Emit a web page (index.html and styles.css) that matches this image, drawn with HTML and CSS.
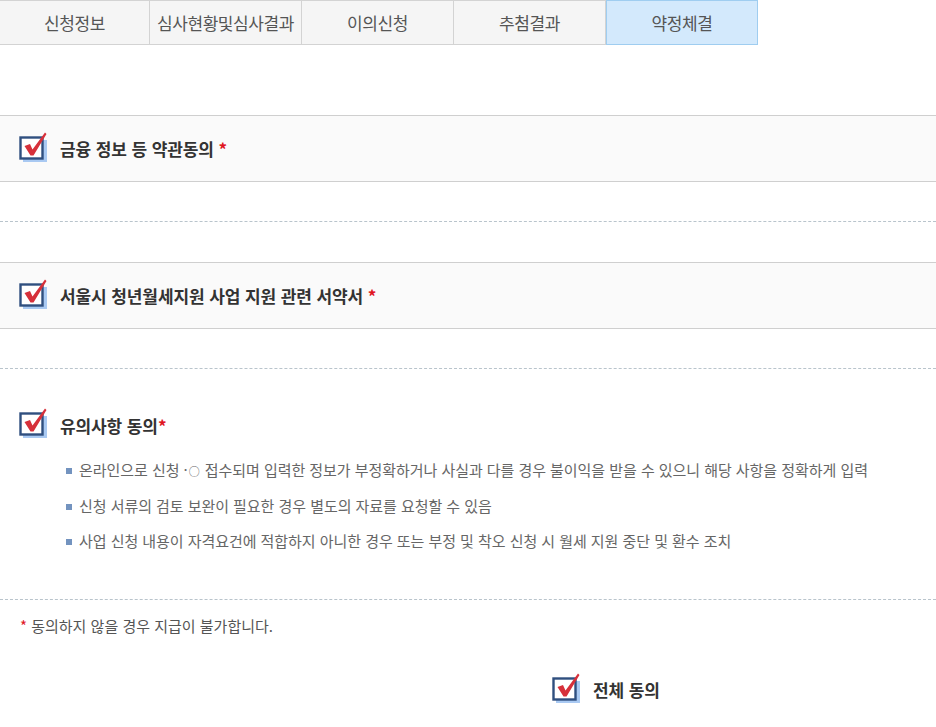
FILE: index.html
```html
<!DOCTYPE html>
<html lang="ko">
<head>
<meta charset="utf-8">
<link rel="stylesheet" href="styles.css">
</head>
<body>
<div class="tabs">
  <div class="tab">신청정보</div>
  <div class="tab">심사현황및심사결과</div>
  <div class="tab">이의신청</div>
  <div class="tab">추첨결과</div>
  <div class="tab active">약정체결</div>
</div>

<div class="gap-top"></div>

<div class="agree-box">
  <span class="chk"><svg viewBox="0 0 32 30" width="32" height="30"><rect x="5" y="8" width="24" height="22" fill="#a9c9f2"/><rect x="2.5" y="5.5" width="22" height="21" fill="#fff" stroke="#2f4f7f" stroke-width="2.4"/><path d="M6.5 14 L12 12 L14.5 17.5 L27 0.5 L28.5 2 L15.5 23.5 L12.5 23.5 Z" fill="#d6303a"/></svg></span>
  <span class="title">금융 정보 등 약관동의 <em>*</em></span>
</div>
<div class="spacer"></div>
<div class="dash"></div>
<div class="spacer spacer-b"></div>

<div class="agree-box">
  <span class="chk"><svg viewBox="0 0 32 30" width="32" height="30"><rect x="5" y="8" width="24" height="22" fill="#a9c9f2"/><rect x="2.5" y="5.5" width="22" height="21" fill="#fff" stroke="#2f4f7f" stroke-width="2.4"/><path d="M6.5 14 L12 12 L14.5 17.5 L27 0.5 L28.5 2 L15.5 23.5 L12.5 23.5 Z" fill="#d6303a"/></svg></span>
  <span class="title">서울시 청년월세지원 사업 지원 관련 서약서 <em>*</em></span>
</div>
<div class="spacer"></div>
<div class="dash"></div>

<div class="notice">
  <div class="notice-head">
    <span class="chk"><svg viewBox="0 0 32 30" width="32" height="30"><rect x="5" y="8" width="24" height="22" fill="#a9c9f2"/><rect x="2.5" y="5.5" width="22" height="21" fill="#fff" stroke="#2f4f7f" stroke-width="2.4"/><path d="M6.5 14 L12 12 L14.5 17.5 L27 0.5 L28.5 2 L15.5 23.5 L12.5 23.5 Z" fill="#d6303a"/></svg></span>
    <span class="title">유의사항 동의<em>*</em></span>
  </div>
  <ul class="bullets">
    <li>온라인으로 신청 ·<span class="small">○</span> 접수되며 입력한 정보가 부정확하거나 사실과 다를 경우 불이익을 받을 수 있으니 해당 사항을 정확하게 입력</li>
    <li>신청 서류의 검토 보완이 필요한 경우 별도의 자료를 요청할 수 있음</li>
    <li>사업 신청 내용이 자격요건에 적합하지 아니한 경우 또는 부정 및 착오 신청 시 월세 지원 중단 및 환수 조치</li>
  </ul>
</div>
<div class="dash"></div>

<p class="note"><em>*</em> 동의하지 않을 경우 지급이 불가합니다.</p>

<div class="all">
  <span class="chk"><svg viewBox="0 0 32 30" width="32" height="30"><rect x="5" y="8" width="24" height="22" fill="#a9c9f2"/><rect x="2.5" y="5.5" width="22" height="21" fill="#fff" stroke="#2f4f7f" stroke-width="2.4"/><path d="M6.5 14 L12 12 L14.5 17.5 L27 0.5 L28.5 2 L15.5 23.5 L12.5 23.5 Z" fill="#d6303a"/></svg></span>
  <span class="title">전체 동의</span>
</div>
</body>
</html>
```

FILE: styles.css
```css
* { box-sizing: border-box; }
html, body { margin: 0; padding: 0; background: #fff; }
body {
  font-family: "Noto Sans CJK KR", "Noto Sans", sans-serif;
  color: #333;
  width: 936px;
}
em { font-style: normal; color: #e0151f; }

.tabs {
  display: flex;
  width: 760px;
  height: 45px;
}
.tab {
  width: 152px;
  height: 45px;
  display: flex;
  align-items: center;
  justify-content: center;
  background: #f5f5f5;
  border: 1px solid #d3d3d3;
  border-left: none;
  font-size: 17px;
  color: #555;
  letter-spacing: -0.4px;
}
.tab:first-child { width: 150px; }
.tab.active {
  background: #d3e9fc;
  border: 1px solid #9fcdf0;
}

.gap-top { height: 70px; }

.agree-box {
  height: 67px;
  background: #fafafa;
  border-top: 1px solid #cfcfcf;
  border-bottom: 1px solid #cfcfcf;
  display: flex;
  align-items: center;
  padding-left: 18px;
}
.chk {
  display: inline-flex;
  width: 32px;
  height: 30px;
  margin-top: -4px;
}
.title {
  font-size: 17px;
  font-weight: bold;
  color: #333;
  margin-left: 10px;
  letter-spacing: -0.1px;
}
.spacer { height: 39px; }
.spacer-b { height: 40px; }
.dash {
  height: 0;
  border-top: 1px dashed #b9c4cc;
}

.notice { padding: 41px 0 32px; }
.notice-head {
  display: flex;
  align-items: center;
  padding-left: 18px;
  height: 30px;
}
.bullets {
  list-style: none;
  margin: 20px 0 0;
  padding: 0 0 0 66px;
}
.bullets li {
  position: relative;
  padding-left: 13px;
  font-size: 15px;
  color: #666;
  line-height: 20px;
  height: 35.5px;
  letter-spacing: -0.05px;
}
.bullets li::before {
  content: "";
  position: absolute;
  left: 0;
  top: 8px;
  width: 6px;
  height: 6px;
  background: #7393bf;
}
.small { font-size: 11px; padding: 0 1px; }

.note {
  margin: 16px 0 0 20px;
  font-size: 15px;
  color: #555;
  line-height: 20px;
}

.all {
  display: flex;
  align-items: center;
  padding-left: 551px;
  margin-top: 39px;
  height: 30px;
}
.all .title { margin-left: 10px; }
```
